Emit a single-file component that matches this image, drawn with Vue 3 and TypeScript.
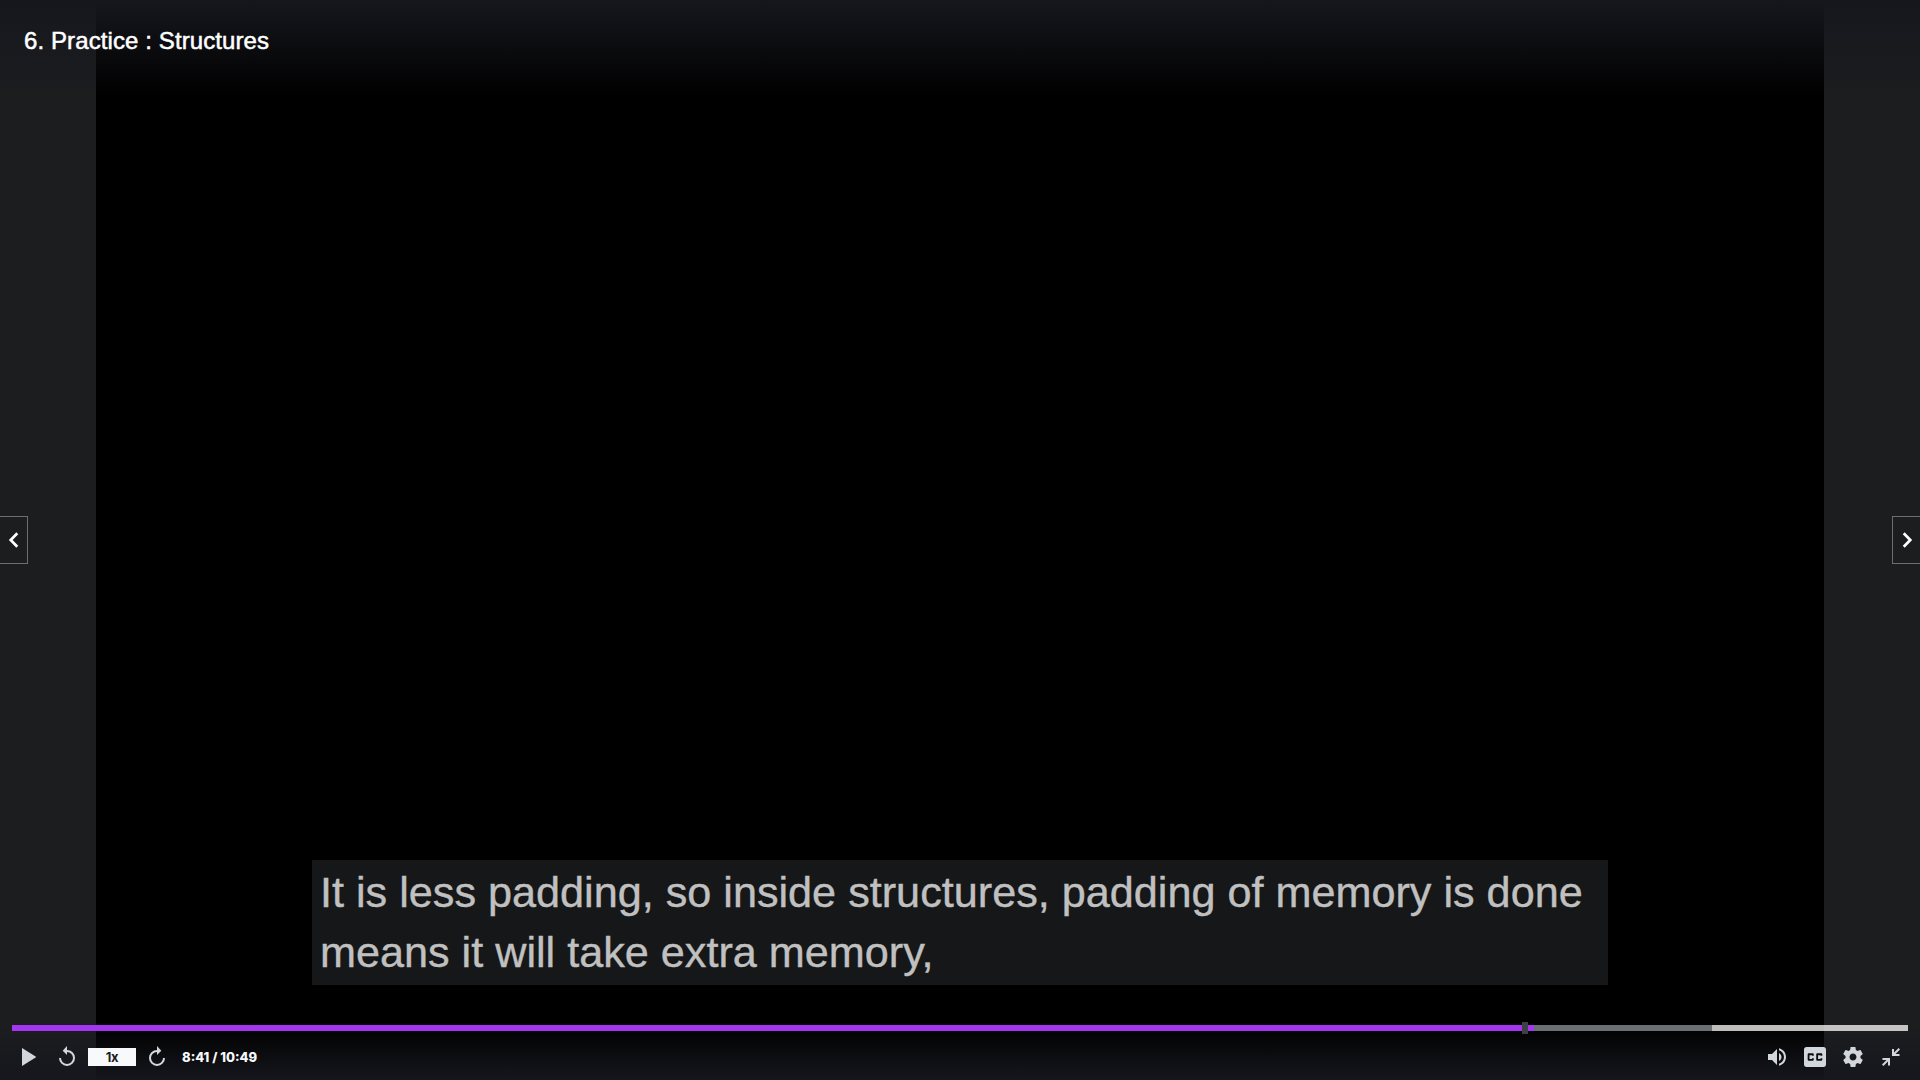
<script setup lang="ts">
import { computed, ref } from 'vue'

const title = '6. Practice : Structures'
const caption = ['It is less padding, so inside structures, padding of memory is done', 'means it will take extra memory,']
const barWidth = 1896
const played = ref(1522)
const buffered = ref(1700)
const marker = ref(1510)
const pct = (n: number) => `${(n / barWidth) * 100}%`
const playedWidth = computed(() => pct(played.value))
const bufferedWidth = computed(() => pct(buffered.value))
const markerLeft = computed(() => pct(marker.value))
</script>

<template>
  <main class="player">
    <div class="video"></div>
    <header class="title-bar"><span class="title">{{ title }}</span></header>

    <button class="nav prev" aria-label="Previous">
      <svg width="12" height="18" viewBox="0 0 12 18"><path d="M9.3 2.2 2.7 9l6.6 6.8" /></svg>
    </button>
    <button class="nav next" aria-label="Next">
      <svg width="12" height="18" viewBox="0 0 12 18"><path d="M2.7 2.2 9.3 9l-6.6 6.8" /></svg>
    </button>

    <div class="caption">
      <div v-for="line in caption" :key="line"><span>{{ line }}</span></div>
    </div>

    <footer class="controls">
      <div class="progress">
        <div class="buffered" :style="{ width: bufferedWidth }"></div>
        <div class="played" :style="{ width: playedWidth }"></div>
        <div class="marker" :style="{ left: markerLeft }"></div>
      </div>
      <div class="buttons">
        <svg class="play" width="14" height="18" viewBox="0 0 14 18"><path d="M0 0v18l14.300-9z" /></svg>
        <svg class="rewind" width="16" height="20" viewBox="0 0 16 20">
          <path d="M8 0v9L3.7 4.7z" />
          <path class="line" d="M7.5 4.9H8A7 7 0 1 1 1 11.9" />
        </svg>
        <button class="rate"><span>1x</span></button>
        <svg class="forward" width="16" height="20" viewBox="0 0 16 20">
          <path d="M8 0v9l4.3-4.3z" />
          <path class="line" d="M8.5 4.9H8a7 7 0 1 0 7 7" />
        </svg>
        <span class="time">8:41 / 10:49</span>
        <span class="spacer"></span>
        <svg class="volume" width="24" height="24" viewBox="0 0 24 24">
          <path d="M3 9v6h4l5 5V4L7 9H3zm13.5 3c0-1.77-1.02-3.29-2.5-4.03v8.05c1.48-.73 2.5-2.25 2.5-4.02zM14 3.23v2.06c2.89.86 5 3.54 5 6.71s-2.11 5.85-5 6.71v2.06c4.01-.91 7-4.49 7-8.77s-2.99-7.86-7-8.77z" />
        </svg>
        <svg class="cc" width="22" height="20" viewBox="3 4 18 16" preserveAspectRatio="none">
          <path d="M19 4H5c-1.11 0-2 .9-2 2v12c0 1.1.89 2 2 2h14c1.1 0 2-.9 2-2V6c0-1.1-.9-2-2-2zm-8 7H9.5v-.5h-2v3h2V13H11v1c0 .55-.45 1-1 1H7c-.55 0-1-.45-1-1v-4c0-.55.45-1 1-1h3c.55 0 1 .45 1 1v1zm7 0h-1.5v-.5h-2v3h2V13H18v1c0 .55-.45 1-1 1h-3c-.55 0-1-.45-1-1v-4c0-.55.45-1 1-1h3c.55 0 1 .45 1 1v1z" />
        </svg>
        <svg class="gear" width="24" height="24" viewBox="0 0 24 24">
          <path d="M19.43 12.98c.04-.32.07-.64.07-.98s-.03-.66-.07-.98l2.11-1.65c.19-.15.24-.42.12-.64l-2-3.46c-.12-.22-.39-.3-.61-.22l-2.49 1c-.52-.4-1.08-.73-1.69-.98l-.38-2.65C14.46 2.18 14.25 2 14 2h-4c-.25 0-.46.18-.49.42l-.38 2.65c-.61.25-1.17.59-1.69.98l-2.49-1c-.23-.09-.49 0-.61.22l-2 3.46c-.13.22-.07.49.12.64l2.11 1.65c-.04.32-.07.65-.07.98s.03.66.07.98l-2.11 1.65c-.19.15-.24.42-.12.64l2 3.46c.12.22.39.3.61.22l2.49-1c.52.4 1.08.73 1.69.98l.38 2.65c.03.24.24.42.49.42h4c.25 0 .46-.18.49-.42l.38-2.65c.61-.25 1.17-.59 1.69-.98l2.49 1c.23.09.49 0 .61-.22l2-3.46c.12-.22.07-.49-.12-.64l-2.11-1.65zM12 15.5c-1.93 0-3.5-1.57-3.5-3.5s1.57-3.5 3.5-3.5 3.5 1.57 3.5 3.5-1.57 3.5-3.5 3.5z" />
        </svg>
        <svg class="collapse" width="18" height="20" viewBox="0 0 18 20">
          <path class="line" d="M11 2v6h6.5M11 8l6.300-6.300M.5 12H7v6.500M7 12 .7 18.300" />
        </svg>
      </div>
    </footer>
  </main>
</template>

<style>
body {
  margin: 0;
  background: #1c1d1f;
}
</style>

<style scoped>
.player {
  position: relative;
  display: flex;
  justify-content: center;
  width: 1920px;
  height: 1080px;
  overflow: hidden;
  background: #1c1d1f;
  font-family: Inter, 'Liberation Sans', sans-serif;
}
.video {
  width: 1728px;
  height: 1080px;
  background: #000;
}
button {
  padding: 0;
  border-radius: 0;
}
.title-bar {
  position: absolute;
  top: 0;
  left: 0;
  right: 0;
  height: 98px;
  box-sizing: border-box;
  padding: 24px 24px 0;
  background: linear-gradient(#16171d, rgba(22, 23, 29, 0));
}
.title {
  display: block;
  width: max-content;
  font: 400 24px/34px 'Liberation Sans', Arial, sans-serif;
  letter-spacing: 0.1px;
  color: #fff;
  white-space: nowrap;
  -webkit-text-stroke: 0.5px #fff;
}
.nav {
  position: absolute;
  top: 516px;
  display: flex;
  align-items: center;
  width: 28px;
  height: 48px;
  box-sizing: border-box;
  border: 1px solid #6a6f73;
  background: #1c1d1f;
}
.nav path {
  fill: none;
  stroke: #fff;
  stroke-width: 2.7;
}
.prev {
  left: 0;
  border-left: 0;
  padding-left: 8px;
}
.next {
  right: 0;
  border-right: 0;
  padding-left: 8px;
}
.caption {
  position: absolute;
  top: 860px;
  left: 312px;
  width: 1296px;
  height: 125px;
  box-sizing: border-box;
  padding: 2px 8px;
  background: #161719;
  color: #c0c0c0;
  font: 43.2px/60px 'Liberation Sans', Arial, sans-serif;
  white-space: nowrap;
  -webkit-text-stroke: 0.4px #c0c0c0;
}
.controls {
  position: absolute;
  left: 0;
  right: 0;
  bottom: 0;
  height: 56px;
  box-sizing: border-box;
  padding: 1px 12px 0;
  background: linear-gradient(rgba(22, 23, 29, 0), #16171d);
}
.progress {
  position: relative;
  height: 6px;
  background: rgba(255, 251, 251, 0.75);
}
.buffered,
.played,
.marker {
  position: absolute;
  top: 0;
  left: 0;
  height: 6px;
}
.buffered {
  background: #6a6f73;
}
.played {
  background: #a435f0;
}
.marker {
  top: -3px;
  width: 6px;
  height: 12px;
  background: #3e4143;
}
.buttons {
  display: flex;
  align-items: center;
  height: 52px;
  padding: 0 8px 0 10px;
}
.buttons svg {
  flex: none;
  fill: #d1d7dc;
}
.buttons .line {
  fill: none;
  stroke: #d1d7dc;
  stroke-width: 2;
}
.rewind {
  margin: -2px 0 0 23px;
}
.rate {
  width: 48px;
  height: 18px;
  margin-left: 13px;
  border: 0;
  background: #f7f9fa;
  color: #1c1d1f;
  font: 700 13px/18px Inter, sans-serif;
  letter-spacing: -0.4px;
}
.forward {
  margin: -2px 0 0 13px;
}
.time {
  margin-left: 17px;
  color: #f7f9fa;
  font: 800 13px/18px Inter, sans-serif;
  white-space: nowrap;
}
.spacer {
  flex: 1;
}
.cc {
  margin-left: 15px;
}
.gear {
  margin-left: 15px;
}
.collapse {
  margin-left: 17px;
}
</style>
